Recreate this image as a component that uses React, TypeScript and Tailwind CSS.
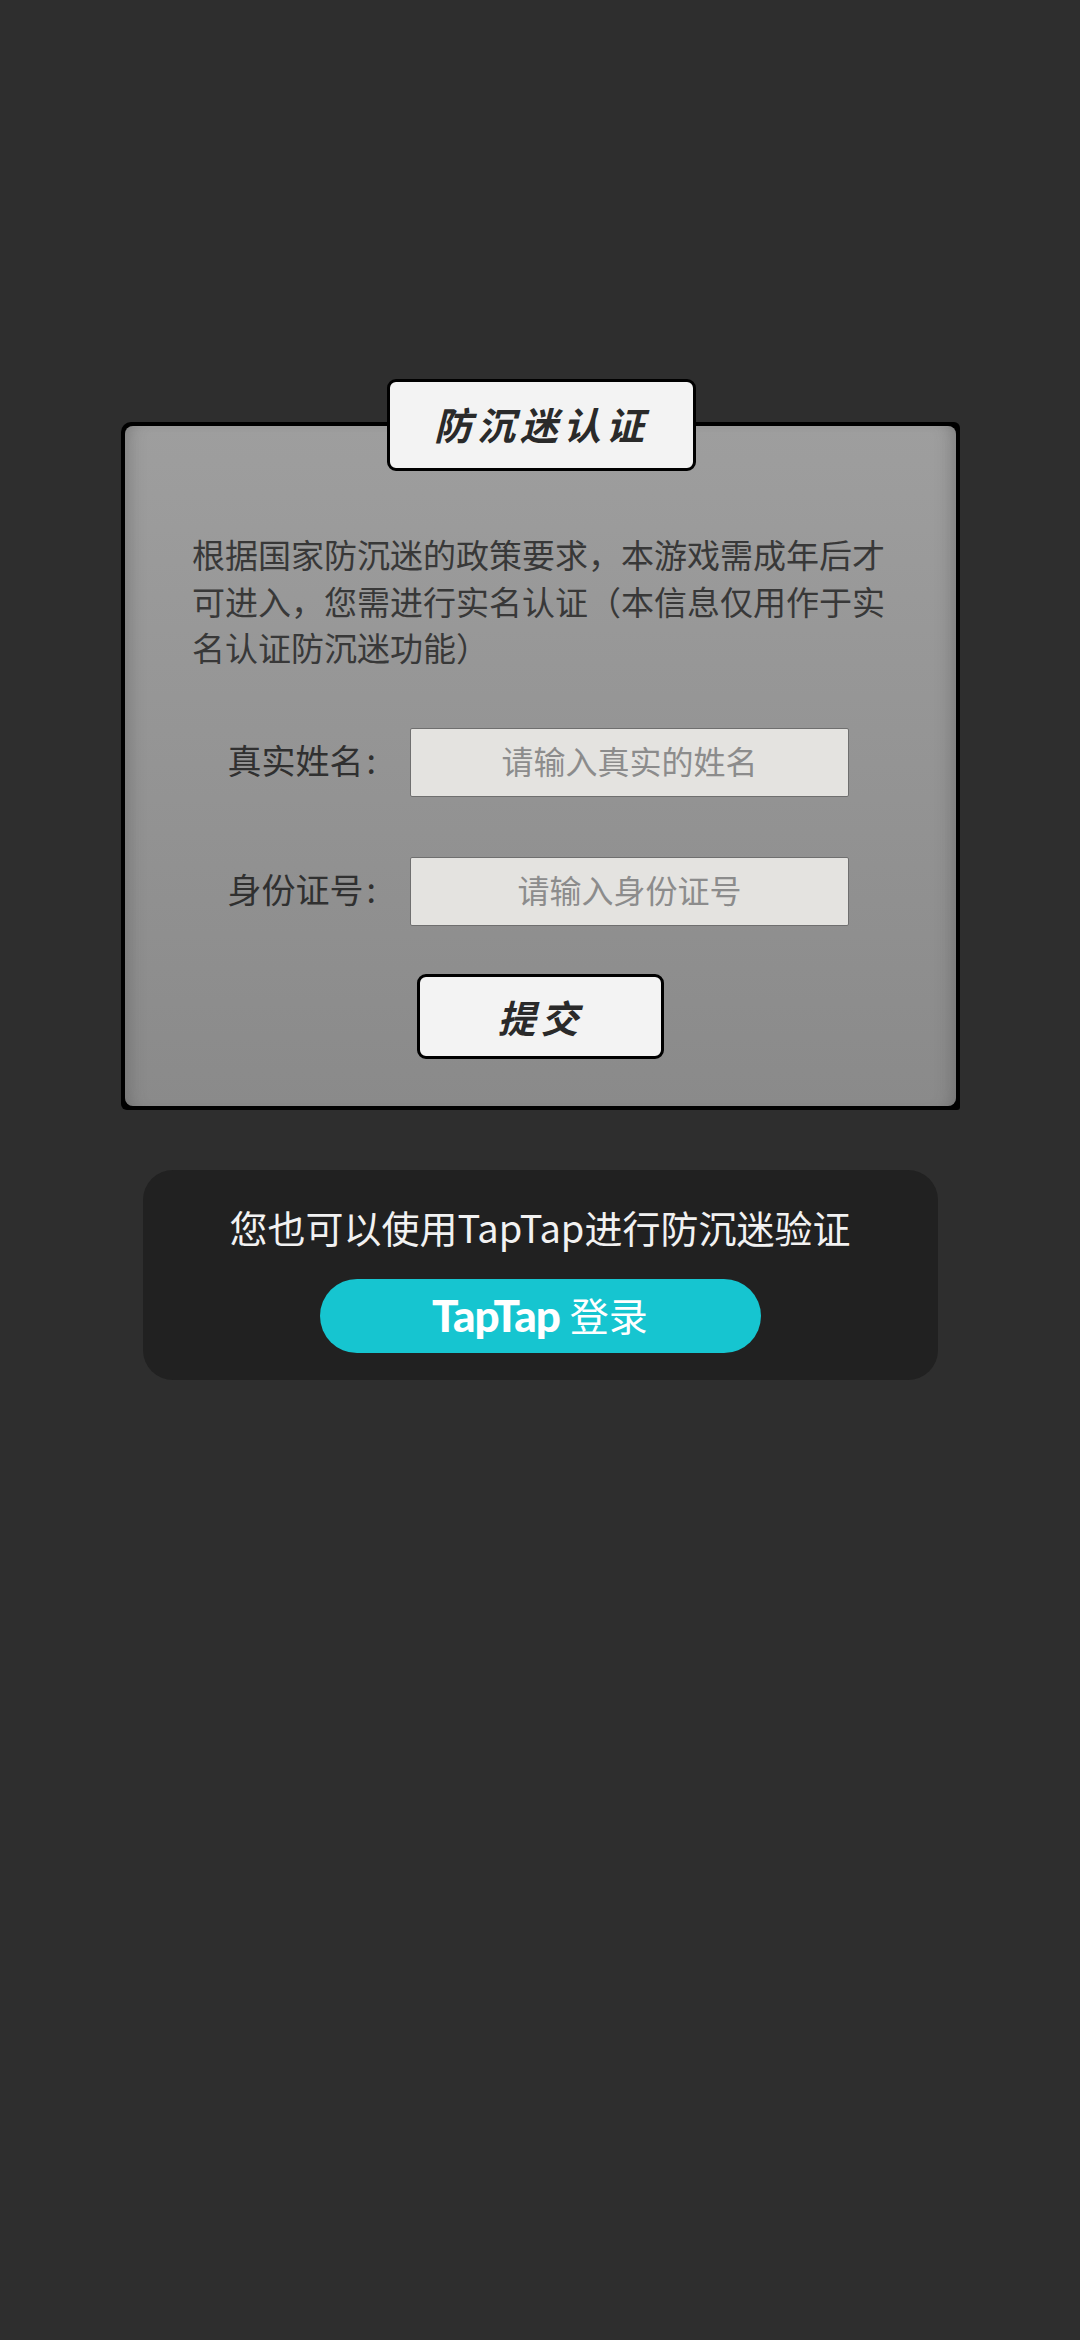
const cjk = "font-['Noto_Sans_CJK_SC','Noto_Sans',sans-serif]";

function Field({ label, placeholder }: { label: string; placeholder: string }) {
  return (
    <div className="flex items-center h-[69px]">
      <span className="w-[208px] shrink-0 text-right pr-[34px] pb-[5px] text-[34px] leading-none text-[#303030] whitespace-nowrap">
        {label}
        <span className="ml-[3px]">:</span>
      </span>
      <div className="w-[439px] h-full pb-[4px] flex items-center justify-center bg-[#e4e3e0] rounded-[2px] border border-[#6f6f6f] text-[32px] text-[#8c8c8c]">
        {placeholder}
      </div>
    </div>
  );
}

export default function App() {
  return (
    <div className={`min-h-[2340px] bg-[#2e2e2e] pt-[379px] flex flex-col items-center ${cjk}`}>
      {/* Panel with the title tab over its top edge */}
      <div className="relative w-[839px] ml-[1px] mt-[43px] h-[688px] rounded-tl-[10px] rounded-tr-[6px] rounded-bl-[6px] rounded-br-[3px] p-[4px] bg-black">
        <div className="h-full rounded-[8px] bg-gradient-to-b from-[#9e9e9e] to-[#8a8a8a] shadow-[inset_16px_0_16px_-12px_rgba(70,70,70,0.35),inset_-16px_0_16px_-12px_rgba(70,70,70,0.35)]">
          <div className="pt-[105px] pl-[67px] pr-[60px]">
            <p className="text-[33px] leading-[46.5px] text-[#383838]">
              根据国家防沉迷的政策要求，本游戏需成年后才可进入，您需进行实名认证（本信息仅用作于实名认证防沉迷功能）
            </p>
          </div>
          <div className="mt-[57px] pl-[77px] flex flex-col gap-[60px]">
            <Field label="真实姓名" placeholder="请输入真实的姓名" />
            <Field label="身份证号" placeholder="请输入身份证号" />
          </div>
          <div className="mt-[48px] flex justify-center">
            <button className="w-[247px] h-[85px] rounded-[9px] border-[3px] border-black bg-[#f3f3f3] text-[38px] font-bold italic tracking-[5px] text-[#2a2a2a]">
              提交
            </button>
          </div>
        </div>
        <div className="absolute left-[266px] top-[-43px] w-[309px] h-[92px] pb-[3px] flex items-center justify-center rounded-[9px] border-[3px] border-black bg-[#f3f3f3] text-[38px] font-bold italic tracking-[5px] text-[#2a2a2a]">
          防沉迷认证
        </div>
      </div>

      {/* TapTap box */}
      <div className="mt-[60px] w-[795px] h-[210px] rounded-[30px] bg-[#212121] flex flex-col items-center pt-[32px]">
        <p className="text-[38px] leading-[50px] text-[#f2f2f2]">您也可以使用TapTap进行防沉迷验证</p>
        <button className="mt-[27px] w-[441px] h-[74px] pb-[3px] rounded-full bg-[#16c5d0] flex items-center justify-center gap-[10px] text-white">
          <span className="font-['Lato',sans-serif] text-[44px] font-black tracking-[-1px]">TapTap</span>
          <span className="text-[39px]">登录</span>
        </button>
      </div>
    </div>
  );
}
